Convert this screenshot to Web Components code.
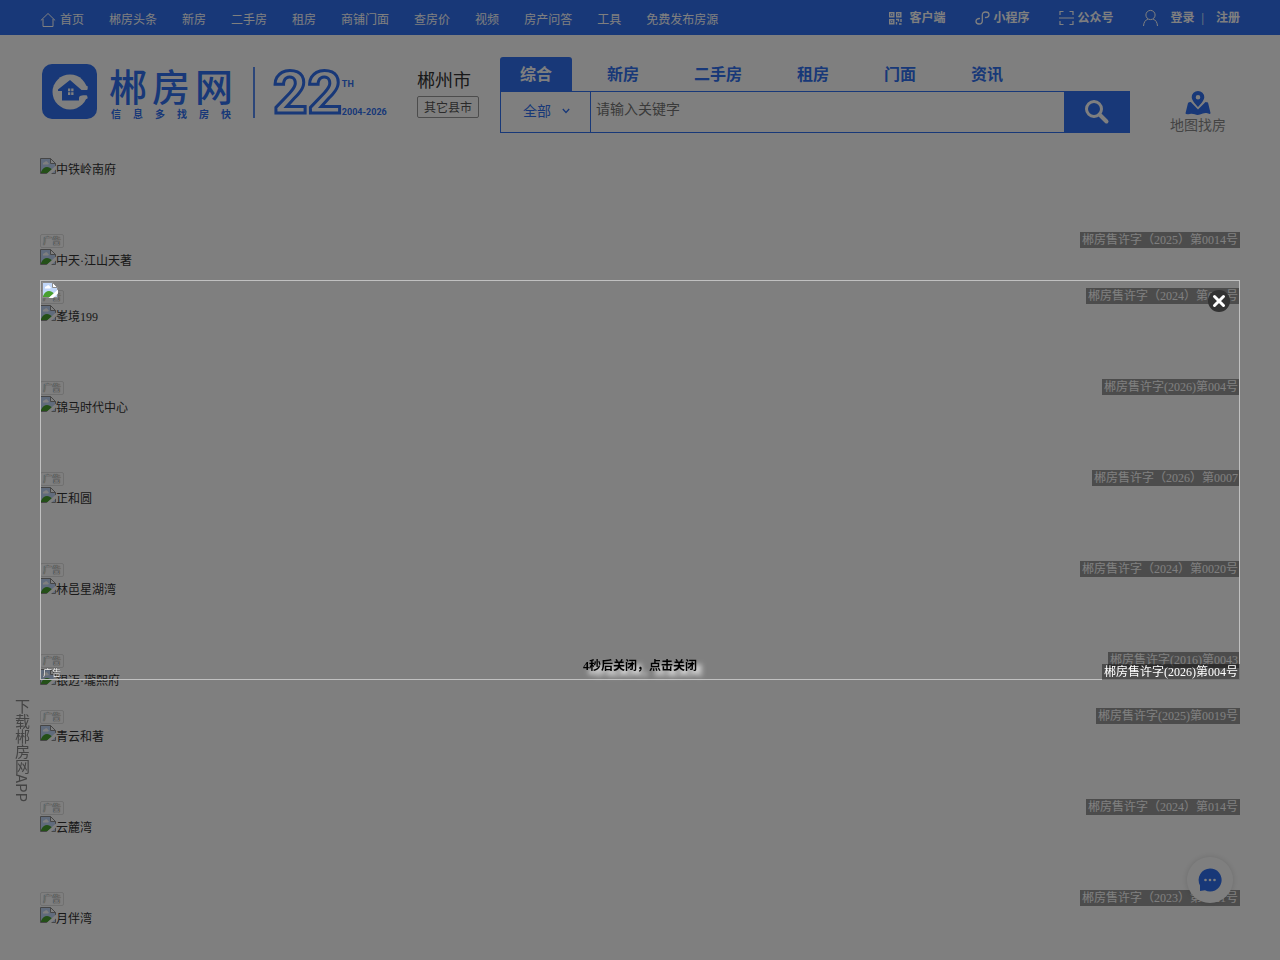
<!DOCTYPE html>
<html lang="zh-CN">
<head>
<meta charset="utf-8">
<title>郴房网</title>
<style>
  :root {
    --blue: #3070f0;
    --wrap: 1200px;
  }
  body {
    margin: 0;
    min-height: 100vh;
    background: #fff;
    color: #333;
    font: 12px/18px "Liberation Serif", "Noto Sans CJK SC", serif;
  }
</style>
</head>
<body>
<top-bar></top-bar>
<site-header></site-header>
<ad-list>
  <ad-row name="中铁岭南府" permit="郴房售许字（2025）第0014号"></ad-row>
  <ad-row name="中天·江山天著" permit="郴房售许字（2024）第018号" short></ad-row>
  <ad-row name="峯境199" permit="郴房售许字(2026)第004号"></ad-row>
  <ad-row name="锦马时代中心" permit="郴房售许字（2026）第0007"></ad-row>
  <ad-row name="正和圆" permit="郴房售许字（2024）第0020号"></ad-row>
  <ad-row name="林邑星湖湾" permit="郴房售许字(2016)第0043"></ad-row>
  <ad-row name="银迈·瓏熙府" permit="郴房售许字(2025)第0019号" short></ad-row>
  <ad-row name="青云和著" permit="郴房售许字（2024）第014号"></ad-row>
  <ad-row name="云麓湾" permit="郴房售许字（2023）第0021号"></ad-row>
  <ad-row name="月伴湾" short></ad-row>
</ad-list>
<app-rail>下载郴房网APP</app-rail>
<chat-button></chat-button>
<ad-popup permit="郴房售许字(2026)第004号">4秒后关闭，点击关闭</ad-popup>

<script>
function define(name, html, setup) {
  const template = document.createElement("template");
  template.innerHTML = html;
  customElements.define(name, class extends HTMLElement {
    connectedCallback() {
      if (this.shadowRoot) return;
      const root = this.attachShadow({ mode: "open" });
      root.appendChild(template.content.cloneNode(true));
      if (setup) setup(this, root);
    }
  });
}

define("broken-image", `
  <style>
    :host { display: block; width: 16px; height: 16px; flex: none; }
    svg { display: block; }
  </style>
  <svg width="16" height="16" viewBox="0 0 16 16" aria-hidden="true">
    <path d="M.5 .5h10l5 5v10H.5z" fill="#c0d6f8"/>
    <path d="M1 15v-1c1.500-3.500 3.500-5 6-5 2 0 3.500 1 5 2.500L8 15z" fill="#48a030"/>
    <path d="M3 6.500c-.5-1.500.7-2.500 1.700-2.200.5-1.500 3-1.300 3.200.5 1.200.2 1.200 1.700 0 1.700z" fill="#fff"/>
    <path d="M.5 15.500V.5h10l5 5v10z" fill="none" stroke="#8c8c8c"/>
    <path d="M10.500 .5v5h5z" fill="#fff" stroke="#8c8c8c"/>
    <path d="M16 7.500 6.500 16H11l5-4.500z" fill="#fff"/>
  </svg>
`);

define("top-bar", `
  <style>
    :host { display: block; background: var(--blue); color: #fff; }
    .wrap { display: flex; justify-content: space-between; max-width: var(--wrap); height: 35px; margin: 0 auto; }
    nav, .tools { display: flex; align-items: center; }
    nav { gap: 25px; padding-top: 4px; }
    .tools { font-weight: 700; }
    a { display: flex; align-items: center; color: inherit; text-decoration: none; white-space: nowrap; }
    nav svg { margin-right: 4px; }
    svg { fill: none; stroke: #fff; }
    .tools a + a { margin-left: 29px; }
    .tools .register { margin-left: 12px; }
    i { font-style: normal; font-weight: 400; margin-left: 7px; }
  </style>
  <div class="wrap">
    <nav>
      <a href="#"><svg width="16" height="16" viewBox="0 0 16 16"><path d="M.8 8.500 8 1.500l7.200 7M3 7v7.500h10V7"/></svg>首页</a>
      <a href="#">郴房头条</a>
      <a href="#">新房</a>
      <a href="#">二手房</a>
      <a href="#">租房</a>
      <a href="#">商铺门面</a>
      <a href="#">查房价</a>
      <a href="#">视频</a>
      <a href="#">房产问答</a>
      <a href="#">工具</a>
      <a href="#">免费发布房源</a>
    </nav>
    <div class="tools">
      <a href="#"><svg width="22" height="14" viewBox="0 0 22 14"><path stroke-width="1.400" d="M1.700 1.700h4.100v4.100H1.700zM8.700 1.700h4.100v4.100H8.700zM1.700 8.700h4.100v4.100H1.700zM3 3.700h1.500M10 3.700h1.500M3 10.700h1.500M8 8.500h2.500v2M13 8v3M8.500 11v2.500M11 13h2.500"/></svg>客户端</a>
      <a href="#"><svg width="19" height="16" viewBox="0 0 19 16"><path stroke-width="1.300" stroke-linecap="round" d="M4.500 8.500C2.500 8.500 1 9.500 1 11.300S2.300 14 4 14s3.300-1.200 3.300-3V5c0-1.800 1.300-3 3.200-3C12.300 2 14 3 14 4.700S12.500 7.500 10.500 7.500"/></svg>小程序</a>
      <a href="#"><svg width="19" height="16" viewBox="0 0 19 16"><path stroke-width="1.200" d="M1 5V1.500h3.500M10.500 1.500H14V5M14 11v3.500h-3.500M4.500 14.500H1V11M0 8h15"/></svg>公众号</a>
      <a href="#"><svg width="28" height="18" viewBox="0 0 28 18"><circle cx="7.500" cy="6" r="4.600"/><path d="M.5 17c.3-4 2-6 4.500-7M10 10c2.600 1 4.200 3 4.500 7"/></svg>登录</a>
      <i>|</i>
      <a href="#" class="register">注册</a>
    </div>
  </div>
`);

define("site-logo", `
  <style>
    :host { display: flex; color: var(--blue); font-family: "Noto Sans CJK SC", sans-serif; }
    svg { display: block; margin: 7px 12px 0 2px; }
    .word { width: 124px; }
    .name, .slogan { display: flex; justify-content: space-between; }
    .name { padding-top: 5px; font-size: 38px; line-height: 46px; font-weight: 500; }
    .slogan { padding: 0 2px; font-size: 10px; line-height: 12px; font-weight: 700; }
    .rule { width: 2px; height: 51px; margin: 10px 18px 0 20px; background: var(--blue); opacity: .8; }
    .years { font: 700 60px/72px Roboto, sans-serif; color: #fff; -webkit-text-stroke: 3px var(--blue); }
    .since { display: flex; flex-direction: column; justify-content: space-between; height: 40px; padding-top: 21px; font: 700 9px/12px Roboto, sans-serif; }
  </style>
  <svg width="55" height="55" viewBox="0 0 55 55" aria-hidden="true">
    <rect width="55" height="55" rx="10" fill="var(--blue)"/>
    <circle cx="28" cy="28" r="17.500" fill="#fff"/>
    <path d="M28 16 39.500 26H48v5.500h-8q-3 0-3 2.500v2.500H20V27h-4v-1.500z" fill="var(--blue)"/>
    <path d="M26 24.500h2.300v2.800H26zM29.200 24.500h2.300v2.800h-2.300zM26 28.200h2.300V31H26zM29.200 28.200h2.300V31h-2.300z" fill="#fff"/>
    <path d="M38 22h7.500q1 4-2 4zM39 37v-3q0-2.500 2.500-2.500h2q2.500 0 2 3z" fill="#fff"/>
  </svg>
  <div class="word">
    <div class="name"><span>郴</span><span>房</span><span>网</span></div>
    <div class="slogan"><span>信</span><span>息</span><span>多</span><span>找</span><span>房</span><span>快</span></div>
  </div>
  <div class="rule"></div>
  <div class="years">22</div>
  <div class="since"><span>TH</span><span>2004-2026</span></div>
`);

define("search-box", `
  <style>
    :host { display: block; color: var(--blue); }
    .tabs { display: flex; gap: 15px; height: 34px; }
    .tabs a { padding: 0 20px; border-radius: 3px 3px 0 0; color: inherit; font-size: 16px; line-height: 36px; font-weight: 700; text-decoration: none; }
    .tabs a.on { background: var(--blue); color: #fff; }
    form { display: flex; height: 40px; border: 1px solid var(--blue); }
    .kind { position: relative; width: 89px; border-right: 1px solid var(--blue); }
    select { appearance: none; box-sizing: border-box; width: 100%; height: 100%; padding: 0 0 0 22px; border: 0; background: none; color: inherit; font: inherit; font-size: 14px; }
    .kind svg { position: absolute; right: 20px; top: 16px; pointer-events: none; }
    input { flex: 1; min-width: 0; padding: 0 5px 4px; border: 0; background: none; font: inherit; font-size: 14px; outline: 0; }
    input::placeholder { color: #757575; }
    button { display: grid; place-items: center; width: 66px; margin: -1px; padding: 0; border: 0; background: var(--blue); }
    form svg { fill: none; }
  </style>
  <div class="tabs">
    <a href="#" class="on">综合</a>
    <a href="#">新房</a>
    <a href="#">二手房</a>
    <a href="#">租房</a>
    <a href="#">门面</a>
    <a href="#">资讯</a>
  </div>
  <form>
    <div class="kind">
      <select aria-label="分类"><option>全部</option></select>
      <svg width="8" height="6" viewBox="0 0 8 6"><path d="M.8 1 4 4.500 7.200 1" stroke="var(--blue)" stroke-width="1.300"/></svg>
    </div>
    <input type="text" aria-label="关键字" placeholder="请输入关键字">
    <button aria-label="搜索"><svg width="26" height="26" viewBox="0 0 26 26" stroke="#fff"><circle cx="10" cy="10" r="7.500" stroke-width="3"/><path d="m15.500 15.500 7 7" stroke-width="4" stroke-linecap="round"/></svg></button>
  </form>
`);

define("site-header", `
  <style>
    :host { display: block; }
    .wrap { display: grid; grid-template-columns: 377px 83px minmax(0, 630px) 1fr; max-width: var(--wrap); height: 101px; margin: 0 auto; padding-top: 22px; }
    .city { display: flex; flex-direction: column; align-items: start; padding-top: 9px; }
    .city b { font-size: 18px; line-height: 30px; font-weight: 400; }
    .city a { height: 20px; padding: 0 6px; border: 1px solid #999; border-radius: 2px; color: #555; line-height: 22px; text-decoration: none; }
    .map { justify-self: end; display: flex; flex-direction: column; align-items: center; margin: 33px 14px 0 0; color: #888; font-size: 14px; line-height: 20px; text-decoration: none; }
  </style>
  <div class="wrap">
    <site-logo></site-logo>
    <div class="city"><b>郴州市</b><a href="#">其它县市</a></div>
    <search-box></search-box>
    <a class="map" href="#">
      <svg width="26" height="26" viewBox="0 0 26 26" fill="var(--blue)"><path fill-rule="evenodd" d="M13 1a6.300 6.300 0 0 1 6.300 6.300C19.300 11 13 17 13 17S6.700 11 6.700 7.300A6.300 6.300 0 0 1 13 1zm0 4a2.300 2.300 0 1 0 0 4.600A2.300 2.300 0 0 0 13 5z"/><path d="M5.800 12 13 19.500 20.500 12l2.500.5 2.500 10.500q0 1-1 1c-4-2-6-1-9.500.5-4 1.500-6-1.500-10-.5q-4.500 1-4.500-.8L3 13q.5-1 2.800-1z"/></svg>
      地图找房
    </a>
  </div>
`);

define("ad-list", `
  <style>
    :host { display: block; max-width: var(--wrap); margin: 0 auto; }
  </style>
  <slot></slot>
`);

/* the corner marks that the rows and the popup both carry */
const marks = `
    .ad, .permit { position: absolute; bottom: 1px; color: #fff; }
    .ad { left: 0; box-sizing: border-box; width: 24px; height: 14px; border: 1px solid rgba(0, 0, 0, .12); border-radius: 2px; font-size: 9px; line-height: 13px; text-align: center; text-shadow: 0 0 1px #000; }
    .permit { right: 0; height: 16px; padding: 0 2px; background: rgba(0, 0, 0, .4); line-height: 17px; }
`;

define("ad-row", `
  <style>
    :host { display: block; position: relative; height: 91px; }
    :host([short]) { height: 56px; }
    :host(:last-child) { height: 24px; }
    .name { display: flex; line-height: 24px; }
    ${marks}
  </style>
  <div class="name"><broken-image></broken-image><span></span></div>
  <div class="ad">广告</div>
  <div class="permit"></div>
`, (host, root) => {
  root.querySelector(".name span").textContent = host.getAttribute("name");
  if (host.hasAttribute("permit")) {
    root.querySelector(".permit").textContent = host.getAttribute("permit");
  } else {
    root.querySelector(".permit").remove();
    root.querySelector(".ad").remove();
  }
});

define("app-rail", `
  <style>
    :host { position: fixed; left: 11px; bottom: 158px; writing-mode: vertical-rl; color: #888; font: 15px/22px "Noto Sans CJK SC", sans-serif; }
  </style>
  <slot></slot>
`);

define("chat-button", `
  <style>
    :host { position: fixed; right: 47px; bottom: 57px; }
    button { display: grid; place-items: center; width: 46px; height: 46px; padding: 0; border: 0; border-radius: 50%; background: #fff; box-shadow: 0 0 6px rgba(0, 0, 0, .15); }
  </style>
  <button aria-label="在线咨询">
    <svg width="24" height="24" viewBox="0 0 24 24"><path d="M12 .5a11.500 11.500 0 1 1-5 21.800L2 23V17.500A11.500 11.500 0 0 1 12 .5z" fill="var(--blue)"/><g fill="#fff"><circle cx="7.500" cy="12" r="1.300"/><circle cx="12" cy="12" r="1.300"/><circle cx="16.500" cy="12" r="1.300"/></g></svg>
  </button>
`);

define("ad-popup", `
  <style>
    :host { position: fixed; inset: 0; display: grid; place-items: center; background: rgba(0, 0, 0, .5); }
    .box { position: relative; box-sizing: border-box; width: 100%; max-width: var(--wrap); height: 400px; padding: 1px; border: 1px solid silver; }
    button { position: absolute; padding: 0; border: 0; background: none; font: inherit; }
    .close { right: 8px; top: 8px; display: grid; width: 24px; height: 24px; }
    .count { left: 0; right: 0; bottom: 4px; margin: auto; color: #000; font-weight: 700; text-shadow: 5px 5px 5px #fff; }
    ${marks}
    .box .ad, .box .permit { bottom: -1px; }
    .box .ad { left: -1px; border-color: transparent; }
    .box .permit { right: -1px; }
  </style>
  <div class="box">
    <broken-image></broken-image>
    <button class="close" aria-label="关闭"><svg width="24" height="24" viewBox="0 0 24 24"><circle cx="12" cy="12" r="11" fill="#333"/><path d="m7.500 7.500 9 9m0-9-9 9" stroke="#fff" stroke-width="3" stroke-linecap="round"/></svg></button>
    <button class="count"><slot></slot></button>
    <div class="ad">广告</div>
    <div class="permit"></div>
  </div>
`, (host, root) => {
  root.querySelector(".permit").textContent = host.getAttribute("permit");
});
</script>
</body>
</html>
